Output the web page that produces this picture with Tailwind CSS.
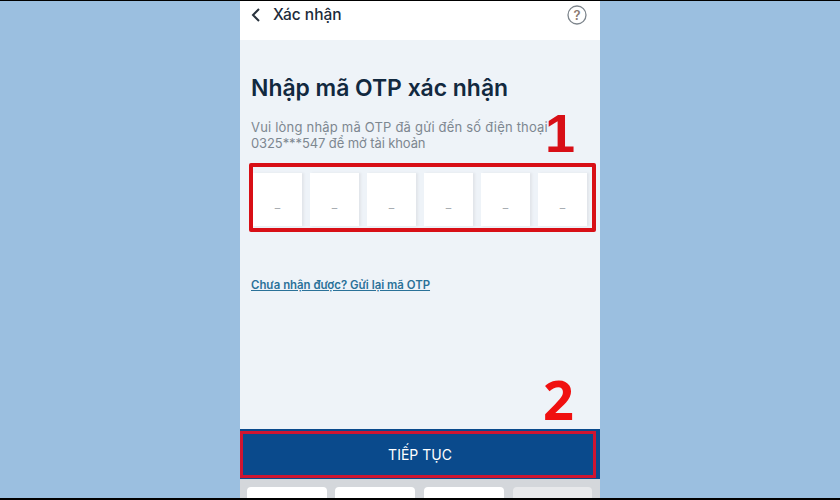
<!DOCTYPE html>
<html lang="vi">
<head>
<meta charset="utf-8">
<script src="https://cdn.jsdelivr.net/npm/@tailwindcss/browser@4"></script>
</head>
<body class="m-0">
<div class="w-[840px] h-[500px] overflow-hidden bg-[#9bbfe0] flex flex-col font-['Inter','Noto_Sans',sans-serif]">
  <div class="h-px bg-black shrink-0"></div>
  <div class="relative mx-auto w-[360px] flex-1 flex flex-col bg-[#eef3f8]">
    <header class="h-[39px] bg-white flex items-center pl-[11px] pr-[13px] pb-[11px] shrink-0">
      <svg class="w-[10px] h-[16px]" viewBox="0 0 10 16" fill="none" stroke="#28323c" stroke-width="2"><path d="M8 2 L2 8 L8 14"/></svg>
      <span class="ml-[12px] text-[15.5px] font-medium text-[#1c2b3a] leading-none">Xác nhận</span>
      <svg class="ml-auto w-[20px] h-[20px]" viewBox="0 0 20 20" fill="none"><circle cx="10" cy="10" r="9" stroke="#7d858c" stroke-width="1.3"/><text x="10" y="14.5" text-anchor="middle" font-size="13" font-weight="600" fill="#8a7a70" font-family="Inter">?</text></svg>
    </header>
    <main class="flex-1 flex flex-col pl-[11px]">
      <h1 class="mt-[33px] text-[22.9px] leading-[30px] font-semibold text-[#12293f] whitespace-nowrap">Nhập mã OTP xác nhận</h1>
      <p class="mt-[16px] text-[13px] leading-[16px] text-[#7d8790] whitespace-nowrap"><span class="tracking-[0.2px]">Vui lòng nhập mã OTP đã gửi đến số điện thoại</span><br><span class="tracking-[-0.1px]">0325***547 để mở tài khoản</span></p>
      <div class="mt-[22px] flex gap-[8px] pl-[2px]">
        <div class="w-[49px] h-[53px] bg-white flex items-center justify-center pt-[8px] text-[12px] text-[#a8adb2] shadow-[2px_0_2px_#e2e5ea]">_</div>
        <div class="w-[49px] h-[53px] bg-white flex items-center justify-center pt-[8px] text-[12px] text-[#a8adb2] shadow-[2px_0_2px_#e2e5ea]">_</div>
        <div class="w-[49px] h-[53px] bg-white flex items-center justify-center pt-[8px] text-[12px] text-[#a8adb2] shadow-[2px_0_2px_#e2e5ea]">_</div>
        <div class="w-[49px] h-[53px] bg-white flex items-center justify-center pt-[8px] text-[12px] text-[#a8adb2] shadow-[2px_0_2px_#e2e5ea]">_</div>
        <div class="w-[49px] h-[53px] bg-white flex items-center justify-center pt-[8px] text-[12px] text-[#a8adb2] shadow-[2px_0_2px_#e2e5ea]">_</div>
        <div class="w-[49px] h-[53px] bg-white flex items-center justify-center pt-[8px] text-[12px] text-[#a8adb2] shadow-[2px_0_2px_#e2e5ea]">_</div>
      </div>
      <a class="mt-[51px] text-[11.4px] leading-[16px] font-semibold text-[#2a7198] underline whitespace-nowrap">Chưa nhận được? Gửi lại mã OTP</a>
    </main>
    <button class="h-[50px] shrink-0 bg-[#0a4a8c] text-white text-[14px] flex items-center justify-center">TIẾP TỤC</button>
    <div class="h-[19px] shrink-0 bg-[#d4d7db] flex gap-[8px] pl-[7px] pt-[8px]">
      <div class="w-[80px] h-[11px] bg-white rounded-t-[4px]"></div>
      <div class="w-[80px] h-[11px] bg-white rounded-t-[4px]"></div>
      <div class="w-[80px] h-[11px] bg-white rounded-t-[4px] ml-[1px]"></div>
      <div class="w-[79px] h-[11px] bg-[#e8e9eb] rounded-t-[4px] ml-[1px]"></div>
    </div>

    <div class="absolute left-[9px] top-[162px] w-[347px] h-[69px] border-[4px] border-[#d80f16] rounded-[2px]"></div>
    <div class="absolute left-0 top-[430px] w-[356px] h-[47px] border-[3px] border-[#d01530]"></div>
    <span class="absolute left-[305px] top-[102px] text-[54px] leading-[60px] font-bold text-[#d80f16] font-['Liberation_Sans',sans-serif]">1</span>
    <span class="absolute left-[303px] top-[368px] text-[54px] leading-[60px] font-bold text-[#f01010] font-['Open_Sans',sans-serif]">2</span>
  </div>
  <div class="h-[2px] bg-black shrink-0"></div>
</div>
</body>
</html>
